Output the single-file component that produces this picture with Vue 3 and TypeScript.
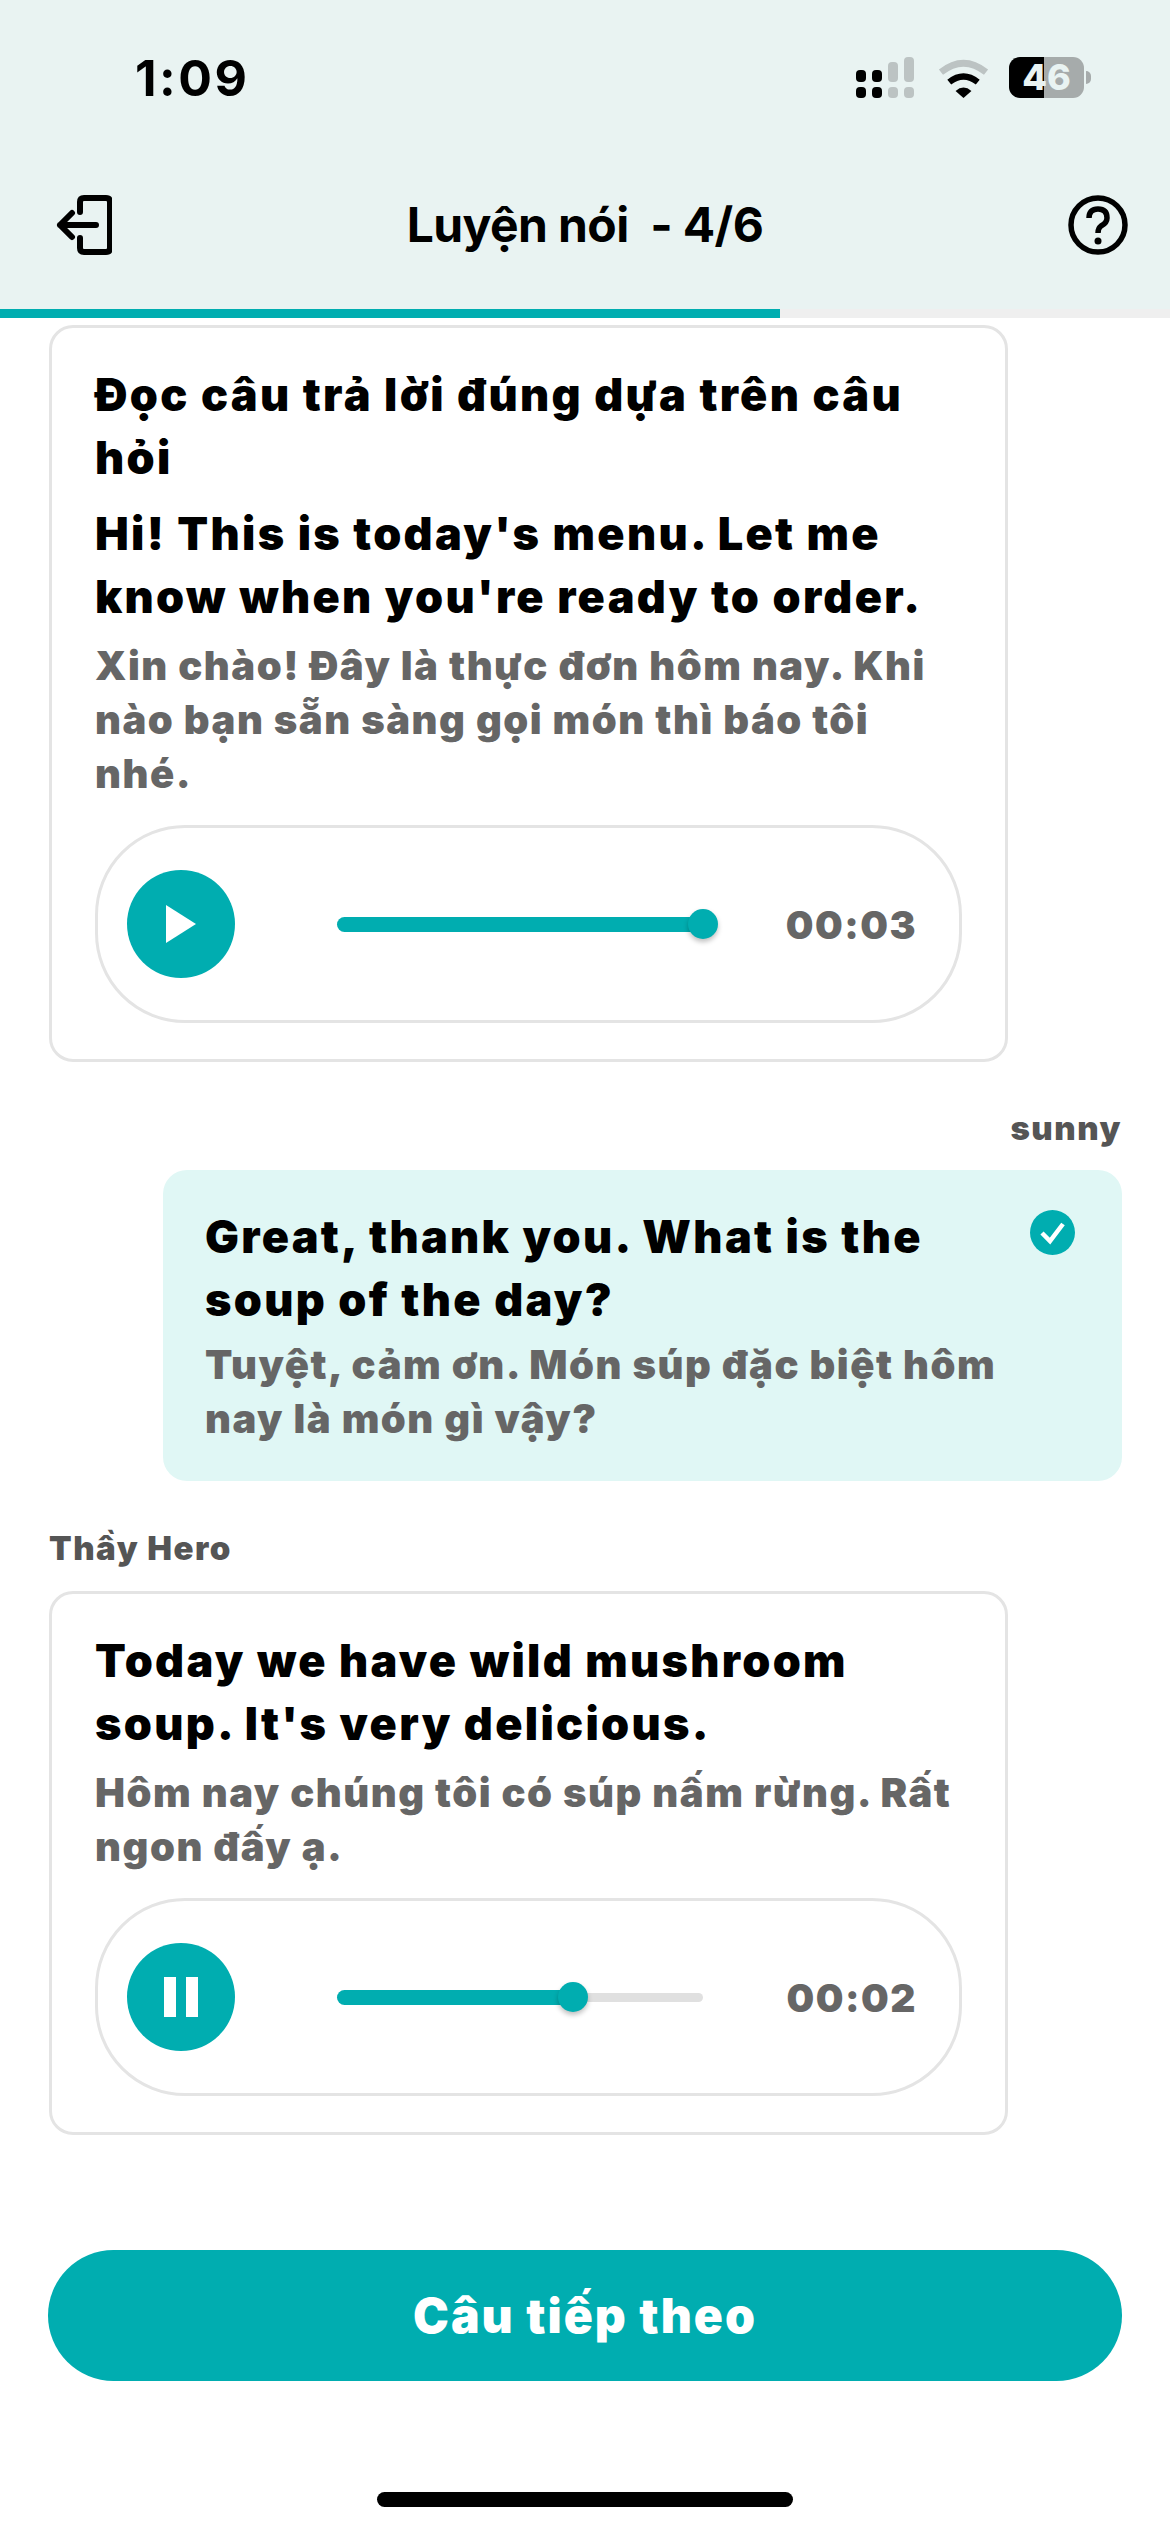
<template>
  <div class="page">
    <header class="top">
      <div class="status">
        <span class="clock">1:09</span>
        <div class="status-icons">
          <svg class="signal" width="58" height="41" viewBox="0 0 58 41">
            <rect x="0" y="13" width="10" height="12" rx="4" fill="#000" />
            <rect x="16" y="13" width="10" height="12" rx="4" fill="#000" />
            <rect x="32" y="5" width="10" height="20" rx="4" fill="#bcc3c3" />
            <rect x="48" y="0" width="10" height="25" rx="4" fill="#bcc3c3" />
            <rect x="0" y="30" width="10" height="11" rx="4" fill="#000" />
            <rect x="16" y="30" width="10" height="11" rx="4" fill="#000" />
            <rect x="32" y="30" width="10" height="11" rx="4" fill="#bcc3c3" />
            <rect x="48" y="30" width="10" height="11" rx="4" fill="#bcc3c3" />
          </svg>
          <svg class="wifi" width="53" height="42" viewBox="405 50 160 125">
            <path d="M417 92Q485 38 553 92" fill="none" stroke="#bcc3c3" stroke-width="20" />
            <path d="M442 122Q485 88 528 122" fill="none" stroke="#000" stroke-width="19" />
            <path d="M461 149Q485 128 509 149L485 170Z" fill="#000" />
          </svg>
          <div class="battery">
            <div class="battery-body"><span>46</span></div>
            <i class="battery-tip"></i>
          </div>
        </div>
      </div>
      <div class="nav">
        <svg width="56" height="60" viewBox="0 0 56 60" fill="none" stroke="#000" stroke-width="6" stroke-linecap="round" stroke-linejoin="round">
          <path d="M24 17V7Q24 3 28 3H50Q54 3 54 7V53Q54 57 50 57H28Q24 57 24 53V43" />
          <path d="M40 30H4M16 18L4 30L16 42" />
        </svg>
        <span class="nav-title">{{ title }}</span>
        <svg width="60" height="60" viewBox="0 0 60 60" fill="none" stroke="#000" stroke-width="5.5">
          <circle cx="30" cy="30" r="27" />
          <path d="M21 23Q21 14 30 14Q39 14 39 23Q39 28 33 31Q30 33 30 38" />
          <circle cx="30" cy="46" r="3.5" fill="#000" stroke="none" />
        </svg>
      </div>
      <div class="progress"><div class="progress-fill" :style="{ width: (4 / 6) * 100 + '%' }"></div></div>
    </header>

    <main class="chat">
      <section class="card">
        <p class="main-text">Đọc câu trả lời đúng dựa trên câu hỏi</p>
        <p class="main-text second">Hi! This is today's menu. Let me know when you're ready to order.</p>
        <p class="sub-text">Xin chào! Đây là thực đơn hôm nay. Khi nào bạn sẵn sàng gọi món thì báo tôi nhé.</p>
        <div class="player">
          <button class="play-btn" type="button">
            <svg width="32" height="40" viewBox="0 0 32 40"><path d="M1 1L31 20L1 39Z" fill="#fff" /></svg>
          </button>
          <div class="slider">
            <div class="slider-fill" :style="{ width: players[0].progress + '%' }"></div>
            <div class="slider-thumb" :style="{ left: players[0].progress + '%' }"></div>
          </div>
          <span class="time">{{ players[0].time }}</span>
        </div>
      </section>

      <div class="name name-right">sunny</div>
      <section class="bubble">
        <svg class="check" width="45" height="45" viewBox="0 0 45 45">
          <circle cx="22.5" cy="22.5" r="22.5" fill="#00adb0" />
          <path d="M12 23L20 31L33 14" fill="none" stroke="#fff" stroke-width="4.5" />
        </svg>
        <p class="main-text">Great, thank you. What is the soup of the day?</p>
        <p class="sub-text">Tuyệt, cảm ơn. Món súp đặc biệt hôm nay là món gì vậy?</p>
      </section>

      <div class="name">Thầy Hero</div>
      <section class="card">
        <p class="main-text">Today we have wild mushroom soup. It's very delicious.</p>
        <p class="sub-text">Hôm nay chúng tôi có súp nấm rừng. Rất ngon đấy ạ.</p>
        <div class="player">
          <button class="play-btn" type="button">
            <svg width="36" height="40" viewBox="0 0 36 40">
              <rect x="1" y="0" width="12" height="40" fill="#fff" />
              <rect x="23" y="0" width="12" height="40" fill="#fff" />
            </svg>
          </button>
          <div class="slider">
            <div class="slider-fill" :style="{ width: players[1].progress + '%' }"></div>
            <div class="slider-thumb" :style="{ left: players[1].progress + '%' }"></div>
          </div>
          <span class="time">{{ players[1].time }}</span>
        </div>
      </section>
    </main>

    <footer class="bottom">
      <button class="next-btn" type="button">Câu tiếp theo</button>
      <div class="home-bar"></div>
    </footer>
  </div>
</template>

<script setup lang="ts">
const title = 'Luyện nói  - 4/6'

const players = [
  { time: '00:03', progress: 100 },
  { time: '00:02', progress: 64.5 },
]
</script>

<style>
html,
body {
  margin: 0;
  background: #fff;
}
</style>

<style scoped>
.page {
  width: 1170px;
  height: 2532px;
  display: flex;
  flex-direction: column;
  background: #fff;
  font-family: Inter, "Noto Sans", sans-serif;
  color: #000;
  overflow: hidden;
}

.top {
  background: #e9f3f2;
}

.status {
  height: 158px;
  box-sizing: border-box;
  padding: 52px 79px 0 135px;
  display: flex;
  justify-content: space-between;
  align-items: flex-start;
}

.clock {
  font-size: 50px;
  font-weight: 700;
  line-height: 52px;
  letter-spacing: 2.5px;
}

.status-icons {
  display: flex;
  align-items: flex-start;
  margin-top: 5px;
}

.wifi {
  margin: 1px 0 0 23px;
}

.battery {
  display: flex;
  align-items: center;
  margin-left: 19px;
}

.battery-body {
  width: 75px;
  height: 41px;
  border-radius: 11px;
  background: linear-gradient(to right, #000 0 35px, #a6abab 35px);
  color: #e9f3f2;
  font-size: 36px;
  font-weight: 800;
  line-height: 41px;
  text-align: center;
}

.battery-tip {
  width: 5px;
  height: 13px;
  margin-left: 2px;
  background: #a6abab;
  border-radius: 0 5px 5px 0;
}

.nav {
  height: 151px;
  box-sizing: border-box;
  padding: 37px 42px 0 56px;
  display: flex;
  justify-content: space-between;
  align-items: flex-start;
}

.nav-title {
  margin-right: 10px;
  font-size: 48px;
  font-weight: 700;
  line-height: 60px;
  white-space: pre;
  letter-spacing: -0.6px;
}

.progress {
  height: 9px;
  background: #efefef;
}

.progress-fill {
  height: 100%;
  background: #00adb0;
}

.chat {
  padding: 7px 48px 0 49px;
  display: flex;
  flex-direction: column;
}

.card {
  width: 959px;
  box-sizing: border-box;
  border: 3px solid #e4e4e4;
  border-radius: 24px;
  padding: 35px 43px 36px;
}

.main-text {
  margin: 0;
  font-size: 45px;
  font-weight: 900;
  line-height: 63px;
  letter-spacing: 2.3px;
}

.main-text.second {
  margin-top: 13px;
}

.sub-text {
  margin: 7px 0 0;
  font-size: 40px;
  font-weight: 900;
  line-height: 54px;
  letter-spacing: 1.5px;
  color: #666;
}

.card .sub-text {
  margin-top: 11px;
}

.player {
  margin-top: 24px;
  height: 198px;
  box-sizing: border-box;
  border: 3px solid #e4e4e4;
  border-radius: 90px;
  padding: 0 42px 0 29px;
  display: flex;
  align-items: center;
}

.play-btn {
  width: 108px;
  height: 108px;
  flex: none;
  border: none;
  padding: 0;
  border-radius: 50%;
  background: #00adb0;
  display: flex;
  align-items: center;
  justify-content: center;
}

.slider {
  position: relative;
  width: 366px;
  height: 9px;
  margin-left: 102px;
  border-radius: 5px;
  background: #e0e0e0;
}

.slider-fill {
  position: absolute;
  left: 0;
  top: -3px;
  height: 15px;
  border-radius: 8px;
  background: #00adb0;
}

.slider-thumb {
  position: absolute;
  top: -11px;
  width: 30px;
  height: 30px;
  margin-left: -15px;
  border-radius: 50%;
  background: #00adb0;
  box-shadow: 0 3px 5px rgba(0, 0, 0, 0.25);
}

.time {
  margin-left: auto;
  font-size: 39px;
  font-weight: 900;
  letter-spacing: 1.5px;
  color: #666;
}

.name {
  margin-top: 45px;
  margin-bottom: 21px;
  font-size: 33px;
  font-weight: 900;
  line-height: 44px;
  letter-spacing: 1.5px;
  color: #555;
}

.name-right {
  margin-top: 44px;
  margin-bottom: 20px;
  text-align: right;
}

.bubble {
  position: relative;
  margin-left: 114px;
  padding: 35px 100px 35px 42px;
  border-radius: 24px;
  background: #e0f7f5;
}

.check {
  position: absolute;
  top: 40px;
  right: 47px;
}

.bottom {
  margin-top: auto;
  padding: 0 48px 25px;
  display: flex;
  flex-direction: column;
  align-items: center;
}

.next-btn {
  width: 100%;
  height: 131px;
  border: none;
  border-radius: 66px;
  background: #00adb0;
  color: #fff;
  font-family: inherit;
  font-size: 48px;
  font-weight: 900;
  letter-spacing: 2px;
}

.home-bar {
  width: 416px;
  height: 15px;
  margin-top: 111px;
  border-radius: 8px;
  background: #000;
}
</style>
